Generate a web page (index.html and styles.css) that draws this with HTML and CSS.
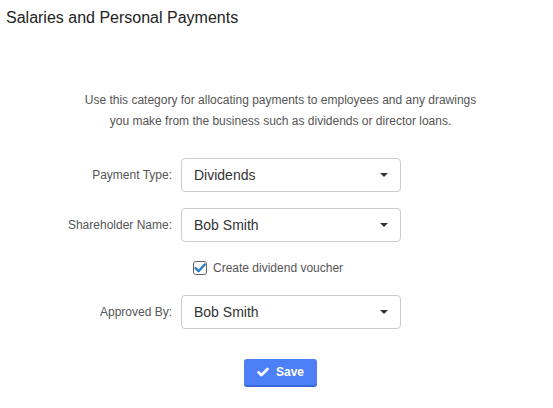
FILE: index.html
```html
<!DOCTYPE html>
<html>
<head>
<meta charset="utf-8">
<link rel="stylesheet" href="styles.css">
</head>
<body>
<div class="page">
  <h1 class="title">Salaries and Personal Payments</h1>
  <p class="desc">Use this category for allocating payments to employees and any drawings<br>you make from the business such as dividends or director loans.</p>
  <div class="form">
    <div class="row">
      <label class="label">Payment Type:</label>
      <div class="select"><span>Dividends</span><span class="caret"></span></div>
    </div>
    <div class="row">
      <label class="label">Shareholder Name:</label>
      <div class="select"><span>Bob Smith</span><span class="caret"></span></div>
    </div>
    <div class="row check-row">
      <span class="label"></span>
      <label class="check">
        <span class="box"><svg width="12" height="10" viewBox="0 0 12 10"><path d="M1.5 5.2 L4.6 8.2 L10.6 1.6" fill="none" stroke="#2f7dc6" stroke-width="2.4" stroke-linecap="round" stroke-linejoin="round"/></svg></span>
        <span>Create dividend voucher</span>
      </label>
    </div>
    <div class="row">
      <label class="label">Approved By:</label>
      <div class="select"><span>Bob Smith</span><span class="caret"></span></div>
    </div>
  </div>
  <div class="actions">
    <button class="btn"><svg width="12" height="10" viewBox="0 0 12 10"><path d="M1.5 5.3 L4.5 8.2 L10.5 2" fill="none" stroke="#fff" stroke-width="2.6" stroke-linecap="round" stroke-linejoin="round"/></svg><span>Save</span></button>
  </div>
</div>
</body>
</html>
```
FILE: styles.css
```css
html, body {
  margin: 0;
  padding: 0;
  background: #fff;
}
.page {
  width: 553px;
  font-family: "Liberation Sans", Arial, sans-serif;
  color: #333;
}
.title {
  margin: 0;
  padding: 8px 0 0 6px;
  font-size: 16px;
  font-weight: normal;
  line-height: 20px;
  color: #222;
}
.desc {
  margin: 62px 0 0 0;
  padding-left: 8px;
  text-align: center;
  font-size: 12px;
  line-height: 21px;
  color: #555;
}
.form {
  margin-top: 26px;
  display: flex;
  flex-direction: column;
  gap: 16px;
}
.row {
  display: flex;
  align-items: center;
}
.label {
  width: 172px;
  padding-right: 9px;
  text-align: right;
  font-size: 12px;
  color: #555;
}
.select {
  box-sizing: border-box;
  width: 220px;
  height: 34px;
  border: 1px solid #ccc;
  border-radius: 4px;
  display: flex;
  align-items: center;
  justify-content: space-between;
  padding: 0 12px 0 12px;
  font-size: 14px;
  color: #333;
}
.caret {
  width: 0;
  height: 0;
  border-left: 4px solid transparent;
  border-right: 4px solid transparent;
  border-top: 4px solid #333;
}
.check-row {
  height: 20px;
  margin-bottom: 1px;
}
.check {
  display: flex;
  align-items: center;
  gap: 6px;
  margin-left: 12px;
  font-size: 12px;
  color: #555;
}
.box {
  box-sizing: border-box;
  width: 14px;
  height: 14px;
  border: 1px solid #666;
  border-radius: 3px;
  display: flex;
  align-items: center;
  justify-content: center;
}
.actions {
  margin-top: 30px;
  display: flex;
  justify-content: center;
  padding-left: 8px;
}
.btn {
  box-sizing: border-box;
  width: 73px;
  height: 28px;
  border: none;
  border-bottom: 2px solid #3b68d8;
  border-radius: 3px;
  background: #4d80f7;
  color: #fff;
  font-family: "Liberation Sans", Arial, sans-serif;
  font-size: 12px;
  font-weight: bold;
  display: flex;
  align-items: center;
  justify-content: center;
  gap: 7px;
  padding: 0;
}
```
